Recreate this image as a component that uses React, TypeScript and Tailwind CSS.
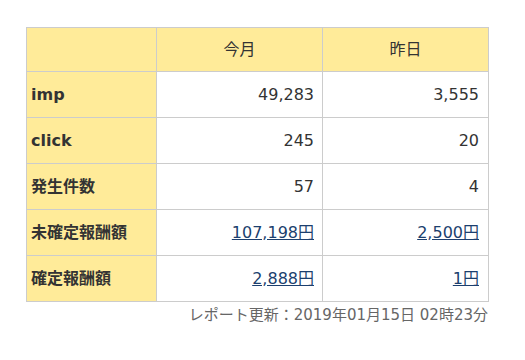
export default function App() {
  const rows = [
    { label: "imp", today: "49,283", yesterday: "3,555", link: false },
    { label: "click", today: "245", yesterday: "20", link: false },
    { label: "発生件数", today: "57", yesterday: "4", link: false },
    { label: "未確定報酬額", today: "107,198円", yesterday: "2,500円", link: true },
    { label: "確定報酬額", today: "2,888円", yesterday: "1円", link: true },
  ];

  return (
    <div
      className="w-[525px] h-[360px] bg-white pt-[27px] pl-[26px] text-[#333]"
      style={{ fontFamily: '"DejaVu Sans", "Noto Sans CJK JP", sans-serif' }}
    >
      <div className="w-[463px]">
        <table className="w-full border-collapse text-[16px] table-fixed">
          <colgroup>
            <col className="w-[130px]" />
            <col className="w-[166px]" />
            <col className="w-[166px]" />
          </colgroup>
          <thead>
            <tr className="h-[44px] bg-[#ffeb99]">
              <th className="border border-[#cccccc]"></th>
              <th className="border border-[#cccccc] font-normal text-center">今月</th>
              <th className="border border-[#cccccc] font-normal text-center">昨日</th>
            </tr>
          </thead>
          <tbody>
            {rows.map((r) => (
              <tr key={r.label} className="h-[46px]">
                <td className="border border-[#cccccc] bg-[#ffeb99] font-bold pl-[4px]">{r.label}</td>
                <td className="border border-[#cccccc] text-right pr-[8px]">
                  {r.link ? (
                    <a href="#" className="text-[#1c3f6e] underline">{r.today}</a>
                  ) : (
                    r.today
                  )}
                </td>
                <td className="border border-[#cccccc] text-right pr-[9px]">
                  {r.link ? (
                    <a href="#" className="text-[#1c3f6e] underline">{r.yesterday}</a>
                  ) : (
                    r.yesterday
                  )}
                </td>
              </tr>
            ))}
          </tbody>
        </table>
        <div className="mt-[3px] text-right text-[15px] text-[#666] leading-[20px] pr-[1px]">
          レポート更新：2019年01月15日 02時23分
        </div>
      </div>
    </div>
  );
}
